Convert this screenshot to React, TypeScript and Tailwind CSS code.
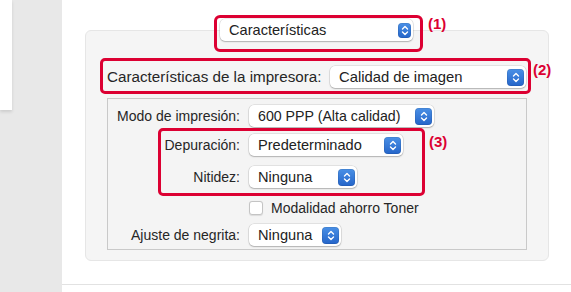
import type { ReactNode } from 'react';

function Stepper({ small = false }: { small?: boolean }) {
  return (
    <span
      className={`flex items-center justify-center rounded-[4px] bg-gradient-to-b from-[#4a90e6] to-[#2565c9] shadow-[inset_0_0_0_0.5px_rgba(0,0,0,0.15)] ${
        small ? 'h-[15px] w-[13px]' : 'h-[17px] w-[17px]'
      }`}
    >
      <svg width="8" height="11" viewBox="0 0 8 11" fill="none">
        <path d="M1.5 4 L4 1.6 L6.5 4" stroke="white" strokeWidth="1.4" strokeLinecap="round" strokeLinejoin="round" />
        <path d="M1.5 7 L4 9.4 L6.5 7" stroke="white" strokeWidth="1.4" strokeLinecap="round" strokeLinejoin="round" />
      </svg>
    </span>
  );
}

function Popup({
  label,
  width,
  small = false,
  text = 'text-[14.6px]',
}: {
  label: string;
  width: string;
  small?: boolean;
  text?: string;
}) {
  return (
    <div
      className={`flex h-[22px] items-center justify-between rounded-[5px] bg-white pl-[9px] pr-[2px] shadow-[0_0_0_0.5px_rgba(0,0,0,0.14),0_1px_1.5px_rgba(0,0,0,0.22)] ${width}`}
    >
      <span className={`leading-none text-[#222] ${text}`}>{label}</span>
      <Stepper small={small} />
    </div>
  );
}

function Mark({ n }: { n: number }) {
  return <span className="text-[15px] font-bold leading-none text-[#dc0032]">({n})</span>;
}

function Row({ label, labelWidth, children }: { label: string; labelWidth: string; children: ReactNode }) {
  return (
    <div className="flex items-center gap-[9px]">
      <span className={`shrink-0 text-right text-[14px] leading-none text-[#262626] ${labelWidth}`}>{label}</span>
      {children}
    </div>
  );
}

export default function App() {
  return (
    <div
      className="flex h-[292px] w-[571px] overflow-hidden bg-white"
      style={{ fontFamily: '"Liberation Sans", Arial, sans-serif' }}
    >
      {/* sidebar */}
      <aside className="flex w-[62px] shrink-0 flex-col bg-[#e8e8e8]">
        <div className="h-[110px] w-[12px] bg-white shadow-[0_2px_3px_rgba(0,0,0,0.12)]" />
      </aside>

      {/* main */}
      <main className="flex flex-1 flex-col pt-[15px]">
        {/* (1) */}
        <div className="relative z-10 ml-[3px] self-center">
          <div className="rounded-[6px] border-[3px] border-[#dc0032] pb-[8px] pl-[3px] pr-[7px] pt-[1px]">
            <Popup label="Características" width="w-[193px]" small />
          </div>
          <div className="absolute left-[calc(100%+5px)] top-[-3px]">
            <Mark n={1} />
          </div>
        </div>

        {/* panel */}
        <div className="relative mx-[23px] mt-[-22px] h-[231px] w-[464px] rounded-[6px] border border-[#e6e6e6] bg-[#f5f5f5] pl-[14px] pt-[27px]">
          {/* (2) */}
          <div className="relative w-[431px]">
            <div className="flex items-center justify-between rounded-[5px] border-[3px] border-[#dc0032] pb-[3px] pl-[4px] pr-[2px] pt-[5px]">
              <span className="text-[15.2px] leading-none text-[#262626]">Características de la impresora:</span>
              <Popup label="Calidad de imagen" width="w-[196px]" text="text-[14.8px]" />
            </div>
            <div className="absolute left-[calc(100%+2px)] top-[0px]">
              <Mark n={2} />
            </div>
          </div>

          {/* inner box */}
          <div className="ml-[7px] mt-[4px] flex h-[152px] w-[420px] flex-col border border-[#c9c9c9] bg-[#f4f4f4] pt-[6px]">
            <Row label="Modo de impresión:" labelWidth="w-[132px]">
              <Popup label="600 PPP (Alta calidad)" width="w-[185px]" text="text-[14.2px]" />
            </Row>

            {/* (3) */}
            <div className="relative ml-[50px] mt-[1px] w-[267px]">
              <div className="flex flex-col gap-[10px] rounded-[5px] border-[3px] border-[#dc0032] pb-[5px] pt-[3px]">
                <Row label="Depuración:" labelWidth="w-[79px]">
                  <Popup label="Predeterminado" width="w-[154px]" />
                </Row>
                <Row label="Nitidez:" labelWidth="w-[79px]">
                  <Popup label="Ninguna" width="w-[108px]" />
                </Row>
              </div>
              <div className="absolute left-[calc(100%+4px)] top-[2px]">
                <Mark n={3} />
              </div>
            </div>

            <div className="ml-[141px] mt-[5px] flex h-[14px] items-center gap-[8px]">
              <span className="h-[14px] w-[14px] rounded-[3px] border border-[#c4c4c4] bg-white shadow-[0_0.5px_1px_rgba(0,0,0,0.1)]" />
              <span className="text-[14px] leading-none text-[#262626]">Modalidad ahorro Toner</span>
            </div>

            <div className="mt-[9px]">
              <Row label="Ajuste de negrita:" labelWidth="w-[132px]">
                <Popup label="Ninguna" width="w-[92px]" />
              </Row>
            </div>
          </div>
        </div>

        <div className="mt-[23px] h-px bg-[#e2e2e2]" />
      </main>
    </div>
  );
}
